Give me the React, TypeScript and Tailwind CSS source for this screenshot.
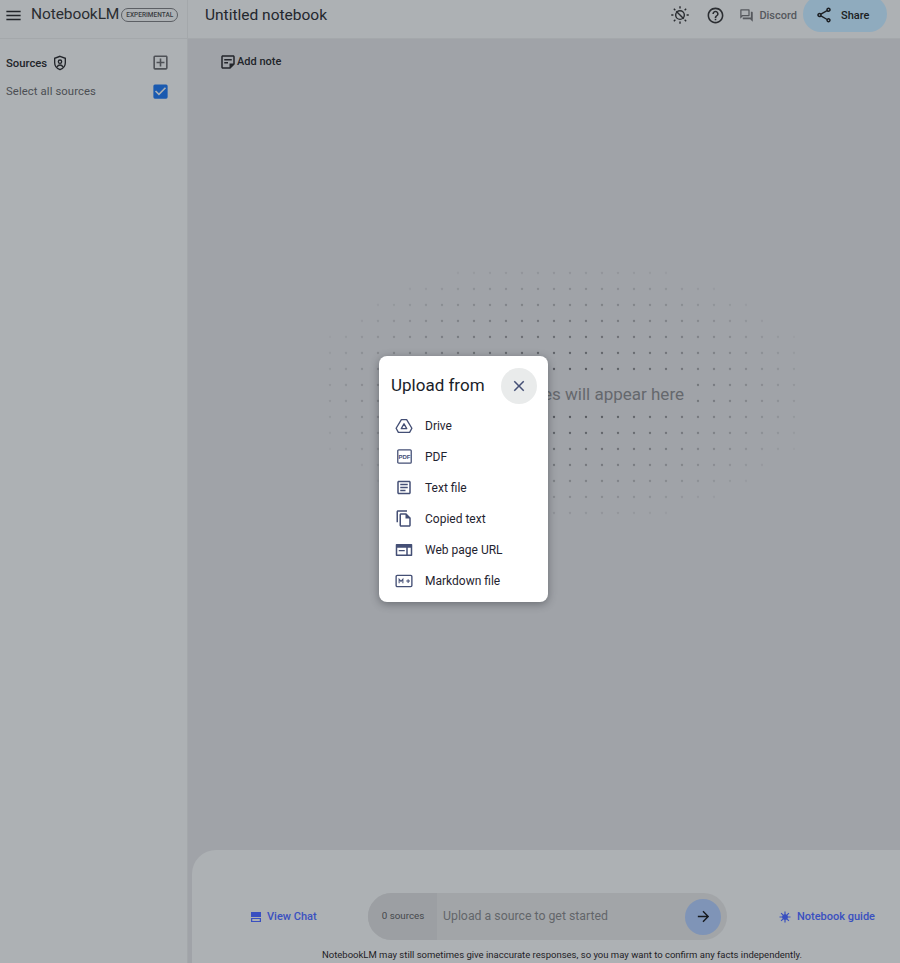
import { MdMenu, MdClose, MdOutlineHelpOutline, MdOutlineForum, MdOutlineShare, MdOutlineAddBox, MdCheckBox, MdOutlineStickyNote2, MdOutlineArticle, MdOutlineFileCopy, MdArrowForward } from 'react-icons/md';

const font = { fontFamily: 'Roboto, "Noto Sans", sans-serif' };

function ThemeIcon() {
  return (
    <svg viewBox="0 0 24 24" className="h-[20px] w-[20px]" fill="none" stroke="currentColor" strokeWidth="1.7">
      <circle cx="12" cy="12" r="5.2" />
      <path d="M12 1.5v2.6M12 19.9v2.6M1.5 12h2.6M19.9 12h2.6M4.6 4.6l1.8 1.8M17.6 17.6l1.8 1.8M4.6 19.4l1.8-1.8M17.6 6.4l1.8-1.8M7.5 7.5l9 9" />
    </svg>
  );
}

function ShieldIcon() {
  return (
    <svg viewBox="0 0 24 24" className="h-[16px] w-[16px]" fill="none" stroke="currentColor" strokeWidth="2">
      <path d="M12 2l8 3v6.500c0 5-3.400 8.700-8 10.500-4.600-1.800-8-5.500-8-10.500V5z" />
      <circle cx="12" cy="10" r="2.500" />
      <path d="M7.500 18c1-2 2.500-3 4.500-3s3.500 1 4.500 3" />
    </svg>
  );
}

function DriveIcon() {
  return (
    <svg viewBox="0 0 24 24" className="h-[18px] w-[18px]" fill="none" stroke="currentColor" strokeWidth="1.800" strokeLinejoin="round">
      <path d="M8.500 3.500h7L22.500 15l-3 5.500h-15l-3-5.500z" />
      <path d="M12 9l3.600 6.500H8.400z" />
    </svg>
  );
}

function PdfIcon() {
  return (
    <svg viewBox="0 0 24 24" className="h-[17px] w-[17px]">
      <rect x="2.500" y="2.500" width="19" height="19" rx="1.500" fill="none" stroke="currentColor" strokeWidth="1.800" />
      <text x="12" y="15" textAnchor="middle" fontSize="8.500" fontWeight="700" fill="currentColor" fontFamily="Liberation Sans, sans-serif">PDF</text>
    </svg>
  );
}

function WebIcon() {
  return (
    <svg viewBox="0 0 24 24" className="h-[18px] w-[18px]" fill="currentColor">
      <path fillRule="evenodd" d="M2 4h20a1 1 0 0 1 1 1v14a1 1 0 0 1-1 1H2a1 1 0 0 1-1-1V5a1 1 0 0 1 1-1zm1 5v9h12V9zm14 0v9h4V9zM5 12h8v1.800H5z" />
    </svg>
  );
}

function MarkdownIcon() {
  return (
    <svg viewBox="0 0 24 24" className="h-[18px] w-[18px]" fill="none" stroke="currentColor">
      <rect x="1.500" y="4.500" width="21" height="15" rx="1.500" strokeWidth="1.800" />
      <path d="M5.500 15V9.500l2.500 3 2.500-3V15M15 12h5M17.500 9.500v5" strokeWidth="1.400" />
    </svg>
  );
}

function ChatPanelIcon() {
  return (
    <svg viewBox="0 0 24 24" className="h-[12px] w-[12px]" fill="currentColor">
      <path fillRule="evenodd" d="M2 2h20v10H2zM2 14h20v8H2zm2.500 2.200v3.600h15v-3.600z" />
    </svg>
  );
}

function GuideIcon() {
  return (
    <svg viewBox="0 0 24 24" className="h-[12px] w-[12px]" fill="currentColor" stroke="currentColor" strokeWidth="2.400">
      <circle cx="12" cy="12" r="4.500" />
      <path d="M12 1v22M1 12h22M4.200 4.200l15.600 15.600M4.200 19.800L19.800 4.200" />
    </svg>
  );
}

// dot field behind the empty notes message
function DotField() {
  const dots = [];
  for (let row = 0; row < 16; row++) {
    for (let col = 0; col < 30; col++) {
      const x = 8 + col * 16;
      const y = 8 + row * 16;
      const d = Math.hypot((x - 240) / 255, (y - 128) / 135);
      if (d < 1) dots.push({ x, y, o: 0.95 * (1 - d) + 0.05 });
    }
  }
  return (
    <svg width="480" height="256" className="absolute inset-0">
      {dots.map((dot, i) => (
        <circle key={i} cx={dot.x} cy={dot.y} r="1.150" fill="#46494e" fillOpacity={dot.o} />
      ))}
    </svg>
  );
}

const sources = [
  { label: 'Drive', icon: <DriveIcon /> },
  { label: 'PDF', icon: <PdfIcon /> },
  { label: 'Text file', icon: <MdOutlineArticle size={19} /> },
  { label: 'Copied text', icon: <MdOutlineFileCopy size={19} /> },
  { label: 'Web page URL', icon: <WebIcon /> },
  { label: 'Markdown file', icon: <MarkdownIcon /> },
];

export default function App() {
  return (
    <div className="relative flex h-[963px] w-[900px] flex-col overflow-hidden bg-[#a0a3a8]" style={font}>
      {/* Header */}
      <header className="flex h-[39px] shrink-0 items-center bg-[#adb1b4] pb-[9px] pt-[1px] text-[#22252a] border-b border-[#a4a8ab]">
        <div className="flex w-[188px] shrink-0 items-center border-r border-[#a4a8ab] h-[39px] -mb-[9px] pb-[9px]">
          <MdMenu size={19} className="ml-[4px] shrink-0" />
          <span className="ml-[8px] shrink-0 text-[15.500px] tracking-[-0.1px] text-[#2a2d31]">NotebookLM</span>
          <span className="ml-[2px] shrink-0 rounded-full border border-[#5c5f64] px-[4px] text-[6.500px] leading-[12px] font-medium text-[#3a3d42]">EXPERIMENTAL</span>
        </div>
        <span className="ml-[17px] mt-[1px] text-[15.500px] text-[#23272e]">Untitled notebook</span>
        <div className="ml-auto flex items-center">
          <span className="text-[#2a2d31]"><ThemeIcon /></span>
          <MdOutlineHelpOutline size={19} className="ml-[16px] text-[#2a2d31]" />
          <MdOutlineForum size={15} className="ml-[14px] text-[#55585d]" />
          <span className="ml-[5px] mt-[2px] text-[11px] font-medium text-[#55585d]">Discord</span>
          <button className="ml-[6px] mr-[13px] -mb-[3px] -mt-[6px] flex h-[36px] w-[84px] items-center rounded-[18px] bg-[#8fabbe] pl-[12px] pt-[2px] text-[#1b1e22]">
            <MdOutlineShare size={18} />
            <span className="ml-[8px] mt-[3px] text-[11px] font-medium">Share</span>
          </button>
        </div>
      </header>

      <div className="flex min-h-0 flex-1">
        {/* Sources sidebar */}
        <aside className="w-[188px] shrink-0 border-r border-[#a4a8ab] bg-[#adb1b4] px-[6px] pt-[14px] pr-[17px]">
          <div className="flex h-[20px] items-center justify-between">
            <div className="flex items-center">
              <span className="mt-[2px] text-[11.300px] font-medium text-[#22252a]">Sources</span>
              <span className="ml-[5px] text-[#22252a]"><ShieldIcon /></span>
            </div>
            <MdOutlineAddBox size={19} className="-mt-[2px] text-[#4e5156]" />
          </div>
          <div className="mt-[8px] flex h-[20px] items-center justify-between">
            <span className="mt-[2px] text-[11.300px] tracking-[0.1px] text-[#4b4e53]">Select all sources</span>
            <MdCheckBox size={19} className="text-[#1a5ab0]" />
          </div>
        </aside>

        {/* Notes area */}
        <main className="flex min-w-0 flex-1 flex-col">
          <div className="flex h-[46px] shrink-0 items-center pl-[31px] text-[#22252a]">
            <MdOutlineStickyNote2 size={18} />
            <span className="text-[11px] font-medium">Add note</span>
          </div>
          <div className="flex flex-1 items-center justify-center pb-[149px] pl-[36px]">
            <div className="relative flex h-[256px] w-[480px] items-center justify-center">
              <DotField />
              <div className="relative w-[266px] bg-[#a0a3a8] pr-[11px] pt-[1px] text-right text-[17px] leading-[30px] text-[#65686d]">
                Saved notes will appear here
              </div>
            </div>
          </div>

          {/* Chat dock */}
          <div className="ml-[4px] flex h-[113px] shrink-0 flex-col rounded-tl-[24px] bg-[#adb1b4] pt-[43px]">
            <div className="flex h-[47px] items-center">
              <div className="flex w-[176px] shrink-0 items-center pl-[58px] text-[#3a50c0]">
                <ChatPanelIcon />
                <span className="ml-[5px] mt-[1px] text-[11px] font-medium">View Chat</span>
              </div>
              <div className="flex h-[47px] w-[359px] shrink-0 items-center overflow-hidden rounded-full bg-[#a2a5a8]">
                <div className="flex h-full w-[69px] shrink-0 items-center justify-center bg-[#9c9fa3] pl-[1px] text-[9.800px] text-[#45484c]">0 sources</div>
                <span className="ml-[6px] text-[12.300px] text-[#62656a]">Upload a source to get started</span>
                <div className="ml-auto mr-[6px] flex h-[36px] w-[36px] items-center justify-center rounded-full bg-[#7f94b7] text-[#15181c]">
                  <MdArrowForward size={17} />
                </div>
              </div>
              <div className="ml-[52px] flex items-center text-[#3a50c0]">
                <GuideIcon />
                <span className="ml-[6px] mt-[1px] text-[11px] font-medium">Notebook guide</span>
              </div>
            </div>
            <p className="mt-[9px] pl-[130px] text-[9.500px] leading-[12px] text-[#1e2126]">
              NotebookLM may still sometimes give inaccurate responses, so you may want to confirm any facts independently.
            </p>
          </div>
        </main>
      </div>

      {/* Upload from menu */}
      <div className="absolute left-[379px] top-[356px] w-[169px] rounded-[8px] bg-white pb-[6px] shadow-[0_2px_8px_rgba(40,44,50,0.45)]">
        <div className="flex h-[60px] items-center justify-between pl-[12px] pr-[11px]">
          <span className="-mt-[1px] text-[17px] text-[#1a1e29]">Upload from</span>
          <button className="flex h-[36px] w-[36px] items-center justify-center rounded-full bg-[#e9ebeb] text-[#444f75]">
            <MdClose size={18} />
          </button>
        </div>
        <ul className="-mt-[6px]">
          {sources.map((source) => (
            <li key={source.label} className="flex h-[31px] items-center pl-[16px] text-[12px] text-[#1f2430]">
              <span className="flex w-[18px] items-center justify-center text-[#444f75]">{source.icon}</span>
              <span className="ml-[12px]">{source.label}</span>
            </li>
          ))}
        </ul>
      </div>
    </div>
  );
}
